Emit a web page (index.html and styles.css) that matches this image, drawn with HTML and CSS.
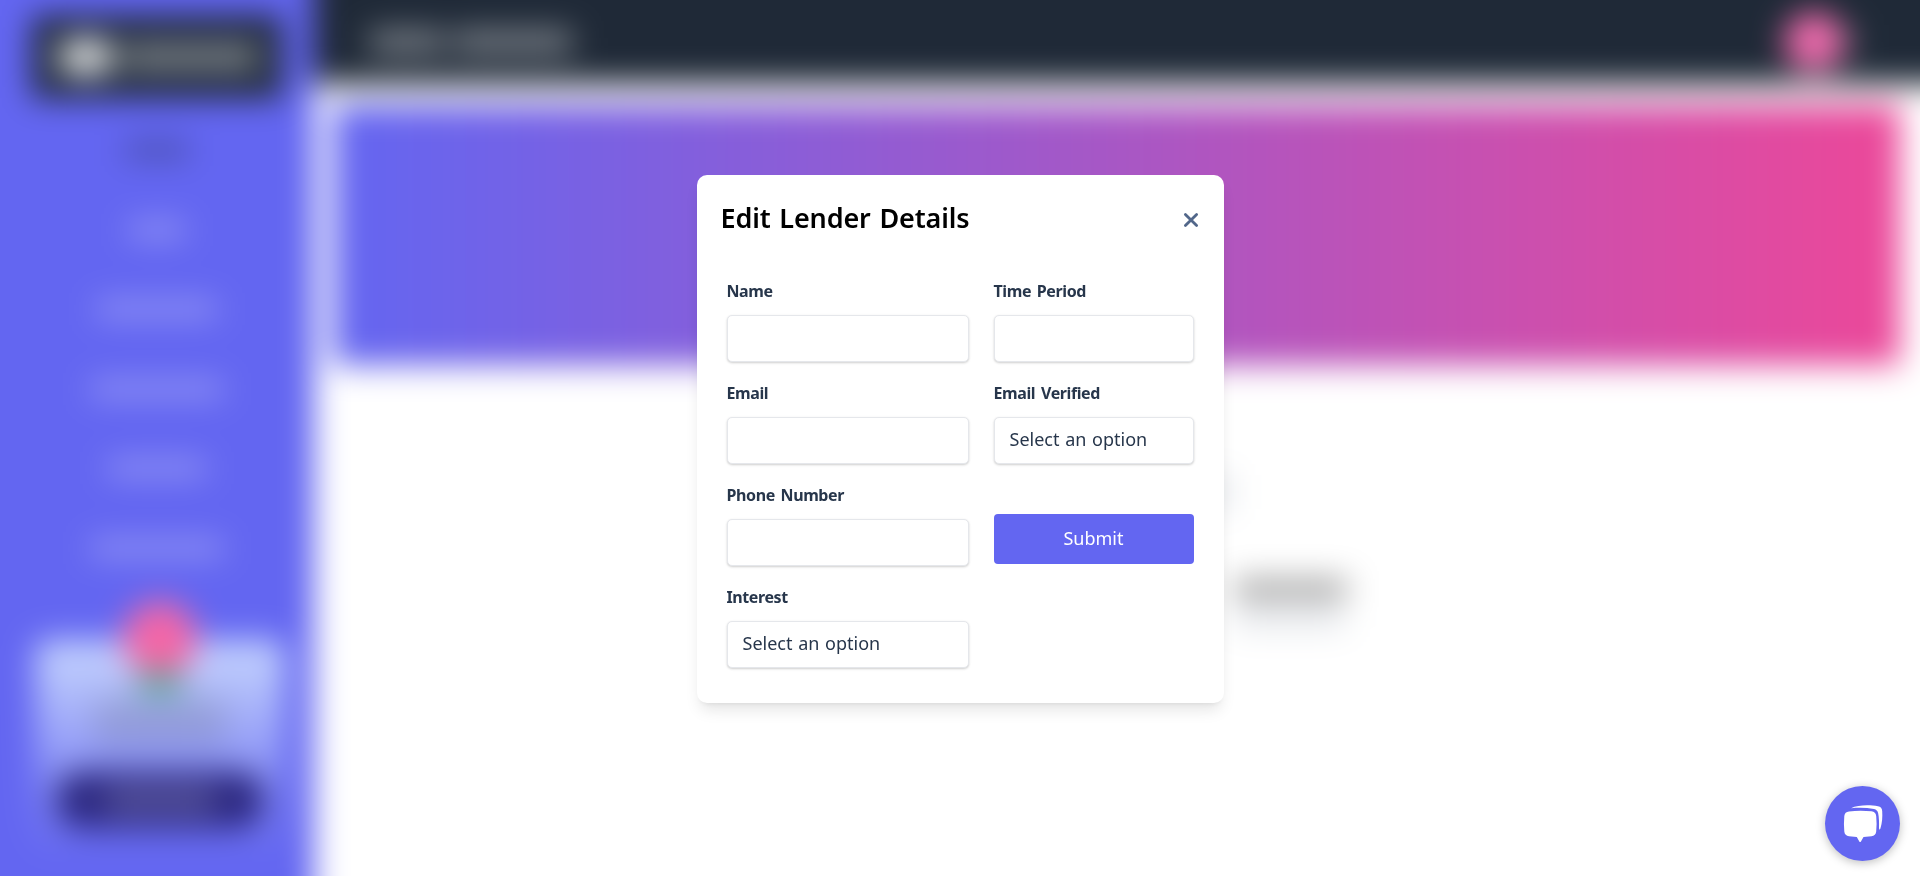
FILE: index.html
```html
<!DOCTYPE html>
<html lang="en">
<head>
<meta charset="utf-8">
<title>Edit Lender Details</title>
<link rel="stylesheet" href="styles.css">
</head>
<body>
<div class="app" aria-hidden="true">
  <aside class="sidebar">
    <div class="brand"><span class="brand-mark"></span><span class="brand-name"></span></div>
    <nav class="nav">
      <span class="nav-item nav-active"></span>
      <span class="nav-item nav-short"></span>
      <span class="nav-item nav-long"></span>
      <span class="nav-item nav-longer"></span>
      <span class="nav-item nav-medium"></span>
      <span class="nav-item nav-longer"></span>
    </nav>
    <div class="promo">
      <span class="promo-flower"></span>
      <span class="promo-stem"></span>
      <span class="promo-text"></span>
      <span class="promo-button"><span class="promo-label"></span></span>
    </div>
  </aside>
  <div class="main">
    <header class="header">
      <div class="title"><span class="title-a"></span><span class="title-b"></span></div>
      <div class="account"><span class="avatar"></span><span class="caret"></span></div>
    </header>
    <section class="banner"></section>
    <section class="details">
      <span class="detail-a"></span>
      <span class="detail-b"></span>
      <span class="detail-c"></span>
    </section>
  </div>
</div>

<div class="overlay">
  <div class="modal" role="dialog" aria-labelledby="modal-title">
    <div class="modal-head">
      <h1 id="modal-title">Edit Lender Details</h1>
      <button class="close" type="button" aria-label="Close">
        <svg width="16" height="16" viewBox="0 0 16 16"><path d="M2.400 2.400 13.600 13.600M13.600 2.400 2.400 13.600"/></svg>
      </button>
    </div>
    <form class="form">
      <div class="column">
        <div class="field"><label for="name">Name</label><input id="name" type="text"></div>
        <div class="field"><label for="email">Email</label><input id="email" type="text"></div>
        <div class="field"><label for="phone">Phone Number</label><input id="phone" type="text"></div>
        <div class="field"><label>Interest</label><div class="select">Select an option</div></div>
      </div>
      <div class="column">
        <div class="field"><label for="period">Time Period</label><input id="period" type="text"></div>
        <div class="field"><label>Email Verified</label><div class="select">Select an option</div></div>
        <button class="submit" type="button">Submit</button>
      </div>
    </form>
  </div>
</div>

<button class="chat" type="button" aria-label="Chat">
  <svg width="75" height="75" viewBox="0 0 75 75">
    <path d="M26 22.2C33 18.7 45 18.7 53 20.2Q57 21 57.2 25C57.6 31 57.2 37 55.4 42.6Q54.4 45 54 42C54.200 37 54 31 53.100 27Q52.400 23.600 49 22.900C42 21.700 34 21.500 26 22.200Z"/>
    <path d="M24 25.400Q35 24 46.500 25.300Q50.700 25.800 51.200 30Q52 38 51.200 45.500Q50.700 49.800 46.500 50.300L38.500 50.900L35.800 55.700Q35 56.500 34.300 55.500L31.800 50.900L24 50.300Q19.800 49.800 19.300 45.500Q18.600 38 19.300 30Q19.800 25.800 24 25.400Z"/>
  </svg>
</button>
</body>
</html>
```
FILE: styles.css
```css
* { box-sizing: border-box; }
body {
  margin: 0;
  height: 876px;
  overflow: hidden;
  background: #fff;
  font-family: "Noto Sans", "Open Sans", sans-serif;
}

/* Page behind the dialog; it bleeds 40px past the window so the blur stays solid at the edges */
.app {
  display: flex;
  width: calc(100% + 80px);
  height: 956px;
  margin: -40px;
  filter: blur(16px);
}
.app span { display: block; flex: none; }
.sidebar {
  width: 354px;
  flex: none;
  padding: 56px 32px 0 72px;
  background: #6366f1;
}
.brand {
  display: flex;
  align-items: center;
  gap: 8px;
  height: 82px;
  padding-left: 24px;
  background: #1f2937;
  border-radius: 4px;
}
.brand-mark { width: 60px; height: 38px; border-radius: 50%; background: rgba(255,255,255,.85); }
.brand-name { width: 134px; height: 24px; background: rgba(255,255,255,.46); }
.nav {
  display: flex;
  flex-direction: column;
  align-items: center;
  gap: 63.600px;
  padding-top: 44px;
}
.nav-item { height: 16px; background: rgba(255,255,255,.33); }
.nav .nav-active { width: 64px; background: rgba(31,41,55,.4); }
.nav-short { width: 56px; }
.nav-medium { width: 98px; }
.nav-long { width: 120px; }
.nav-longer { width: 132px; }
.promo {
  display: flex;
  flex-direction: column;
  align-items: center;
  width: 250px;
  height: 216px;
  margin: 84px 0 0 3px;
  border-radius: 14px;
  background: linear-gradient(#c7d6fe, #6366f1);
}
.promo-flower { width: 74px; height: 76px; margin-top: -39px; border-radius: 50%; background: #f466a6; }
.promo-stem { width: 42px; height: 20px; margin-top: -5px; background: #4fae8c; }
.promo-text { width: 130px; height: 50px; margin-top: 4px; background: rgba(107,114,128,.25); }
.promo-button { width: 208px; height: 58px; margin-top: 25px; padding: 18px 50px; border-radius: 26px; background: #2c2880; }
.promo-label { height: 22px; background: rgba(255,255,255,.24); }

.main { flex: 1; background: #fff; }
.header {
  display: flex;
  justify-content: space-between;
  align-items: center;
  height: 124px;
  padding: 40px 104px 0 56px;
  background: #1f2937;
}
.title { display: flex; gap: 10px; }
.title span { height: 22px; background: rgba(255,255,255,.44); }
.title-a { width: 74px; }
.title-b { width: 118px; }
.account { display: flex; align-items: center; gap: 2px; }
.avatar { width: 60px; height: 60px; border-radius: 50%; background: #f06cae; }
.caret { width: 10px; height: 34px; background: rgba(255,255,255,.22); }
.banner {
  height: 260px;
  margin: 21px 60px 0 20px;
  border-radius: 4px;
  background: linear-gradient(90deg, #6366f1, #ec4899);
}
.details { padding: 118px 0 0 921px; }
.detail-a { width: 0; height: 18px; box-shadow: -14px 0 0 8px rgba(100,116,139,.25); }
.detail-b { width: 112px; height: 18px; margin-top: 79px; background: rgba(0,0,0,.42); }
.detail-c { width: 110px; height: 18px; margin-top: 12px; background: rgba(100,116,139,.2); }

/* Dialog */
.overlay {
  position: fixed;
  inset: 0;
  display: flex;
  justify-content: center;
  align-items: flex-start;
  padding-top: 175px;
}
.modal {
  width: 527px;
  height: 528px;
  padding: 23px 24px 0;
  border-radius: 10px;
  background: #fff;
  box-shadow: 0 10px 15px -3px rgba(0,0,0,.1), 0 4px 6px -4px rgba(0,0,0,.1);
}
.modal-head { display: flex; justify-content: space-between; align-items: center; height: 40px; }
h1 { margin: 0; font-size: 27px; font-weight: 600; line-height: 40px; color: #000; white-space: nowrap; word-spacing: 2px; letter-spacing: -0.15px; }
.close { display: flex; padding: 4px 1px 0; border: 0; background: none; }
.close path { fill: none; stroke: #52678a; stroke-width: 2.8; stroke-linecap: round; }
.form { display: grid; grid-template-columns: 242px 200px; column-gap: 25px; padding: 40px 6px 0; }
.field { height: 102px; }
.field label {
  display: block;
  height: 37px;
  font-size: 16px;
  font-weight: 700;
  line-height: 26px;
  letter-spacing: -0.4px;
  word-spacing: 2px;
  color: #27364b;
  white-space: nowrap;
}
.field input, .select {
  display: block;
  width: 100%;
  height: 47px;
  padding: 0 15px;
  border: 1px solid #e5e7eb;
  border-radius: 5px;
  background: #fff;
  box-shadow: 0 1px 3px rgba(0,0,0,.1), 0 1px 2px rgba(0,0,0,.1);
  font-size: 18px;
  line-height: 43px;
  word-spacing: 1px;
  color: #27364b;
  white-space: nowrap;
}
.submit {
  display: block;
  width: 100%;
  height: 50px;
  margin-top: 32px;
  padding: 0 0 3px;
  border: 0;
  border-radius: 4px;
  background: #6366f1;
  color: #fff;
  font: 18px/46px "Noto Sans", "Open Sans", sans-serif;
}

.chat {
  position: fixed;
  right: 20px;
  bottom: 15px;
  width: 75px;
  height: 75px;
  padding: 0;
  border: 0;
  border-radius: 50%;
  background: #6366f1;
  box-shadow: 0 2px 10px rgba(0,0,0,.25);
}
.chat svg { display: block; fill: #fff; }
```
